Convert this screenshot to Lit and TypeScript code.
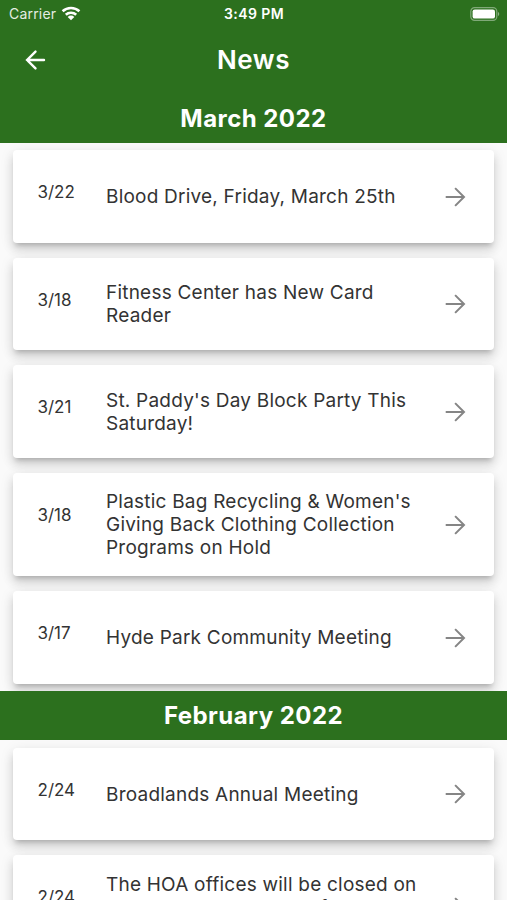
import { LitElement, html, css } from "lit";
import { customElement, property } from "lit/decorators.js";

interface NewsItem {
  date: string;
  lines: string[];
}

const sections: { month: string; items: NewsItem[] }[] = [
  {
    month: "March 2022",
    items: [
      { date: "3/22", lines: ["Blood Drive, Friday, March 25th"] },
      { date: "3/18", lines: ["Fitness Center has New Card", "Reader"] },
      { date: "3/21", lines: ["St. Paddy's Day Block Party This", "Saturday!"] },
      {
        date: "3/18",
        lines: ["Plastic Bag Recycling & Women's", "Giving Back Clothing Collection", "Programs on Hold"],
      },
      { date: "3/17", lines: ["Hyde Park Community Meeting"] },
    ],
  },
  {
    month: "February 2022",
    items: [
      { date: "2/24", lines: ["Broadlands Annual Meeting"] },
      { date: "2/24", lines: ["The HOA offices will be closed on", "Monday, February 21st for", "\u00a0"] },
    ],
  },
];

@customElement("status-bar")
class StatusBar extends LitElement {
  static styles = css`
    :host {
      display: grid;
      grid-template-columns: 1fr auto 1fr;
      align-items: center;
      height: 27px;
      padding: 0 7px 0 9px;
      color: #fff;
      font-size: 14px;
    }
    .left {
      display: flex;
      align-items: center;
      gap: 5px;
    }
    .carrier {
      letter-spacing: 0.2px;
      opacity: 0.88;
    }
    .time {
      font-size: 14px;
      font-weight: 600;
      letter-spacing: 0.4px;
      margin-left: -1px;
    }
    .battery {
      justify-self: end;
    }
    svg {
      display: block;
    }
  `;
  render() {
    return html`
      <div class="left">
        <span class="carrier">Carrier</span>
        <svg width="20" height="15" viewBox="0 0 20 15" fill="none" stroke="#fff" stroke-width="2.6">
          <path d="M1.6 5.3a12.2 12.2 0 0 1 16.8 0" />
          <path d="M4.8 8.8a7.5 7.5 0 0 1 10.4 0" />
          <path d="M10 14.2 6.7 10.9a4.7 4.7 0 0 1 6.6 0Z" fill="#fff" stroke="none" />
        </svg>
      </div>
      <span class="time">3:49 PM</span>
      <svg class="battery" width="30" height="14" viewBox="0 0 30 14">
        <rect x="0.8" y="0.6" width="26" height="12.8" rx="3.8" fill="none" stroke="#fff" stroke-opacity=".4" stroke-width="1.2" />
        <rect x="2.6" y="2.4" width="22.4" height="9.2" rx="2.2" fill="#fff" />
        <path d="M28 4.9a2.4 2.4 0 0 1 0 4.2Z" fill="#fff" fill-opacity=".45" />
      </svg>
    `;
  }
}

@customElement("news-card")
class NewsCard extends LitElement {
  @property({ attribute: false }) item!: NewsItem;
  static styles = css`
    :host {
      box-sizing: border-box;
      display: grid;
      grid-template-columns: 68.4px 1fr 24px;
      align-items: center;
      min-height: 92.7px;
      padding: 17.3px 27.3px 16.7px 25px;
      border-radius: 4px;
      background: #fff;
      color: #333;
      box-shadow: 0 5px 5px -3px rgba(0, 0, 0, 0.2), 0 7px 10px 1px rgba(0, 0, 0, 0.1),
        0 3px 14px 1px rgba(0, 0, 0, 0.08);
    }
    .date {
      align-self: start;
      padding-top: 13.8px;
      font-size: 17px;
      line-height: 22px;
      letter-spacing: -0.05px;
    }
    .title {
      font-size: 19px;
      line-height: 23.2px;
      letter-spacing: 0.22px;
      white-space: nowrap;
    }
    .line {
      display: block;
    }
    svg {
      display: block;
    }
  `;
  render() {
    return html`
      <span class="date">${this.item.date}</span>
      <div class="title">${this.item.lines.map((l) => html`<span class="line">${l}</span>`)}</div>
      <svg width="24" height="24" viewBox="0 0 24 24" fill="none" stroke="#858585" stroke-width="2">
        <path d="M2.7 12H21M12.1 3.1 21 12l-8.9 8.9" />
      </svg>
    `;
  }
}

@customElement("app-root")
class AppRoot extends LitElement {
  static styles = css`
    :host {
      display: block;
      height: 900px;
      overflow: hidden;
      background: #fafafa;
      font-family: Inter, "Liberation Sans", sans-serif;
    }
    .top {
      background: #2c701e;
    }
    .nav {
      display: grid;
      grid-template-columns: 1fr auto 1fr;
      align-items: center;
      height: 66.5px;
      padding: 0 23px;
      color: #fff;
    }
    h1,
    h2 {
      margin: 0;
      color: #fff;
    }
    h1 {
      padding-bottom: 1px;
      font-size: 26px;
      font-weight: 600;
      letter-spacing: 0.6px;
    }
    h2 {
      position: relative;
      height: 49.1px;
      background: #2c701e;
      font-size: 24px;
      font-weight: 700;
      line-height: 49px;
      letter-spacing: 0.45px;
      text-align: center;
    }
    .cards {
      display: flex;
      flex-direction: column;
      gap: 14.8px;
      padding: 7.6px 12.6px 7.4px;
    }
  `;
  render() {
    return html`
      <header class="top">
        <status-bar></status-bar>
        <div class="nav">
          <svg width="24" height="24" viewBox="0 0 24 24" fill="none" stroke="#fff" stroke-width="2.4" stroke-linecap="round">
            <path d="M21 12H4.2M12.5 3.6 4.1 12l8.4 8.4" />
          </svg>
          <h1>News</h1>
        </div>
      </header>
      ${sections.map(
        (s) => html`<section>
          <h2>${s.month}</h2>
          <div class="cards">${s.items.map((i) => html`<news-card .item=${i}></news-card>`)}</div>
        </section>`
      )}
    `;
  }
}
